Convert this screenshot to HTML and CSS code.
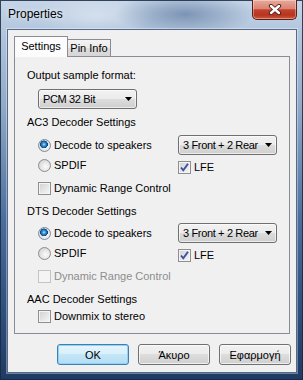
FILE: index.html
```html
<!DOCTYPE html>
<html lang="en">
<head>
  <meta charset="UTF-8">
  <title>Properties</title>
  <link rel="stylesheet" href="styles.css">
</head>
<body>
  <div class="window">
    <div class="titlebar">
      <span class="title">Properties</span>
      <div class="close">
        <svg width="14" height="11" viewBox="0 0 14 11">
          <path d="M3 2 L11 9 M11 2 L3 9" stroke="#4a1d18" stroke-width="4.2" stroke-linecap="round"/>
          <path d="M3 2 L11 9 M11 2 L3 9" stroke="#ffffff" stroke-width="2.4" stroke-linecap="round"/>
        </svg>
      </div>
    </div>

    <div class="client">
      <div class="tabs">
        <div class="tab active">Settings</div>
        <div class="tab">Pin Info</div>
      </div>

      <div class="page">
        <div class="label">Output sample format:</div>
        <div class="indent">
          <div class="combo pcm">PCM 32 Bit<svg class="arrow" width="7" height="4" viewBox="0 0 7 4"><path d="M0 0 H7 L3.5 4 Z"/></svg></div>
        </div>

        <!-- AC3 -->
        <div class="heading">AC3 Decoder Settings</div>
        <div class="group">
          <div class="opt"><span class="radio on"></span>Decode to speakers</div>
          <div class="combo">3 Front + 2 Rear<svg class="arrow" width="7" height="4" viewBox="0 0 7 4"><path d="M0 0 H7 L3.5 4 Z"/></svg></div>
          <div class="opt"><span class="radio"></span>SPDIF</div>
          <div class="opt lfe"><span class="check"><svg width="11" height="11" viewBox="0 0 11 11"><path d="M2 5.5 L4.3 8.3 L9 1.8" fill="none" stroke="#3b4f9e" stroke-width="1.9"/></svg></span>LFE</div>
          <div class="opt wide"><span class="check"></span>Dynamic Range Control</div>
        </div>

        <!-- DTS -->
        <div class="heading">DTS Decoder Settings</div>
        <div class="group dts">
          <div class="opt"><span class="radio on"></span>Decode to speakers</div>
          <div class="combo">3 Front + 2 Rear<svg class="arrow" width="7" height="4" viewBox="0 0 7 4"><path d="M0 0 H7 L3.5 4 Z"/></svg></div>
          <div class="opt"><span class="radio"></span>SPDIF</div>
          <div class="opt lfe"><span class="check"><svg width="11" height="11" viewBox="0 0 11 11"><path d="M2 5.5 L4.3 8.3 L9 1.8" fill="none" stroke="#3b4f9e" stroke-width="1.9"/></svg></span>LFE</div>
          <div class="opt wide disabled"><span class="check"></span>Dynamic Range Control</div>
        </div>

        <!-- AAC -->
        <div class="heading">AAC Decoder Settings</div>
        <div class="indent">
          <div class="opt short"><span class="check"></span>Downmix to stereo</div>
        </div>
      </div>

      <div class="buttons">
        <div class="btn default">OK</div>
        <div class="btn">Άκυρο</div>
        <div class="btn">Εφαρμογή</div>
      </div>
    </div>
  </div>
</body>
</html>
```

FILE: styles.css
```css
body {
  margin: 0;
  font-family: "Liberation Sans", Arial, sans-serif;
  font-size: 11px;
  color: #000;
}
.window {
  width: 303px;
  height: 380px;
  display: flex;
  flex-direction: column;
  background:
    radial-gradient(ellipse 70px 22px at 185px 14px, rgba(60, 90, 135, 0.5), transparent),
    radial-gradient(ellipse 60px 20px at 95px 16px, rgba(255, 255, 255, 0.35), transparent),
    linear-gradient(180deg, #c6d6e8 0px, #b3c7dd 30px, #8ea8c6 110px, #4a6e9c 220px, #2c4c79 320px, #1f3a62 380px);
  box-shadow: inset 0 0 0 1px rgba(25, 40, 65, 0.85);
}
.titlebar {
  height: 29px;
  display: flex;
  justify-content: space-between;
  align-items: flex-start;
}
.title {
  margin: 7px 0 0 8px;
  font-size: 12px;
  line-height: 14px;
  text-shadow: 0 0 5px rgba(255, 255, 255, 0.9);
}
.close {
  width: 45px;
  height: 20px;
  margin-right: 6px;
  box-sizing: border-box;
  display: flex;
  align-items: center;
  justify-content: center;
  border: 1px solid #5c1e16;
  border-top: none;
  border-radius: 0 0 5px 5px;
  background: linear-gradient(180deg, #e8a999 0%, #d98474 45%, #c4412c 52%, #b63520 80%, #cf5a3c 100%);
  box-shadow: inset 0 0 0 1px rgba(255, 255, 255, 0.35);
}
.client {
  flex: 1;
  margin: 0 6px 7px 7px;
  padding: 6px 6px 0 6px;
  background: #f0f0f0;
  border: 1px solid #56698a;
  box-shadow: 0 0 0 1px rgba(255, 255, 255, 0.35);
  display: flex;
  flex-direction: column;
}
.tabs {
  display: flex;
  align-items: flex-end;
  height: 20px;
}
.tab {
  height: 17px;
  width: 44px;
  margin-left: -1px;
  box-sizing: border-box;
  border: 1px solid #898c95;
  border-bottom: none;
  text-align: center;
  line-height: 16px;
  background: linear-gradient(180deg, #f3f3f3 0%, #ebebeb 50%, #dddddd 51%, #d6d6d6 100%);
}
.tab.active {
  position: relative;
  z-index: 1;
  height: 21px;
  width: 54px;
  margin-left: 0;
  margin-bottom: -1px;
  line-height: 18px;
  background: #fcfcfc;
}
.page {
  height: 278px;
  box-sizing: border-box;
  border: 1px solid #898c95;
  padding: 10px 12px 0 12px;
  background: #f0f0f0;
}
.label, .heading {
  height: 16px;
  line-height: 16px;
}
.heading {
  margin-top: 5px;
}
.indent {
  margin-left: 11px;
}
.combo {
  width: 99px;
  height: 20px;
  box-sizing: border-box;
  padding: 0 4px;
  display: flex;
  align-items: center;
  justify-content: space-between;
  letter-spacing: -0.35px;
  border: 1px solid #707070;
  border-radius: 3px;
  background: linear-gradient(180deg, #f2f2f2 0%, #ebebeb 49%, #dddddd 50%, #cfcfcf 100%);
  box-shadow: inset 0 0 0 1px rgba(255, 255, 255, 0.6);
}
.combo.pcm {
  margin-top: 6px;
}
.arrow {
  fill: #000;
  flex-shrink: 0;
}
.group {
  display: grid;
  grid-template-columns: 140px 99px;
  margin: 5px 0 0 11px;
}
.group.dts {
  margin-top: 4px;
}
.opt {
  height: 20px;
  display: flex;
  align-items: center;
  white-space: nowrap;
}
.opt.short {
  height: 18px;
}
.opt.lfe {
  padding-top: 4px;
  box-sizing: border-box;
}
.opt.wide {
  grid-column: 1 / -1;
  margin-top: 3px;
}
.radio {
  width: 13px;
  height: 13px;
  margin-right: 3px;
  box-sizing: border-box;
  border: 1px solid #8d8d8d;
  border-radius: 50%;
  background: radial-gradient(circle at 60% 60%, #fbfbfb 0, #e6e6e6 45%, #c9c9c9 100%);
}
.radio.on {
  border-color: #7b8c9c;
  background:
    radial-gradient(circle at 45% 40%, #b9ecff 0, #3a9ee0 1.4px, #15599c 3.2px, #0d3f78 3.7px, transparent 4.1px),
    radial-gradient(circle at 60% 60%, #fbfbfb 0, #e6e6e6 45%, #c9c9c9 100%);
}
.check {
  width: 13px;
  height: 13px;
  margin-right: 3px;
  box-sizing: border-box;
  border: 1px solid #8e8f8f;
  background: linear-gradient(135deg, #d0d0d0 0%, #e4e4e4 50%, #f6f6f6 100%);
  box-shadow: inset 0 0 0 1px #f4f4f4;
  display: flex;
  align-items: center;
  justify-content: center;
}
.disabled {
  color: #8d8d8d;
}
.disabled .check {
  border-color: #c4c4c4;
  background: #f4f4f4;
  box-shadow: none;
}
.buttons {
  display: flex;
  justify-content: flex-end;
  gap: 9px;
  margin: 10px -1px 0 0;
}
.btn {
  width: 72px;
  height: 21px;
  box-sizing: border-box;
  border: 1px solid #707070;
  border-radius: 3px;
  display: flex;
  align-items: center;
  justify-content: center;
  background: linear-gradient(180deg, #f2f2f2 0%, #ebebeb 49%, #dddddd 50%, #cfcfcf 100%);
  box-shadow: inset 0 0 0 1px rgba(255, 255, 255, 0.65);
}
.btn.default {
  border-color: #3c7fb1;
  background: linear-gradient(180deg, #e6f5fd 0%, #d8effb 49%, #c4e6f7 50%, #b4ddf3 100%);
  box-shadow: inset 0 0 0 1px #8fd3f7;
}
```
